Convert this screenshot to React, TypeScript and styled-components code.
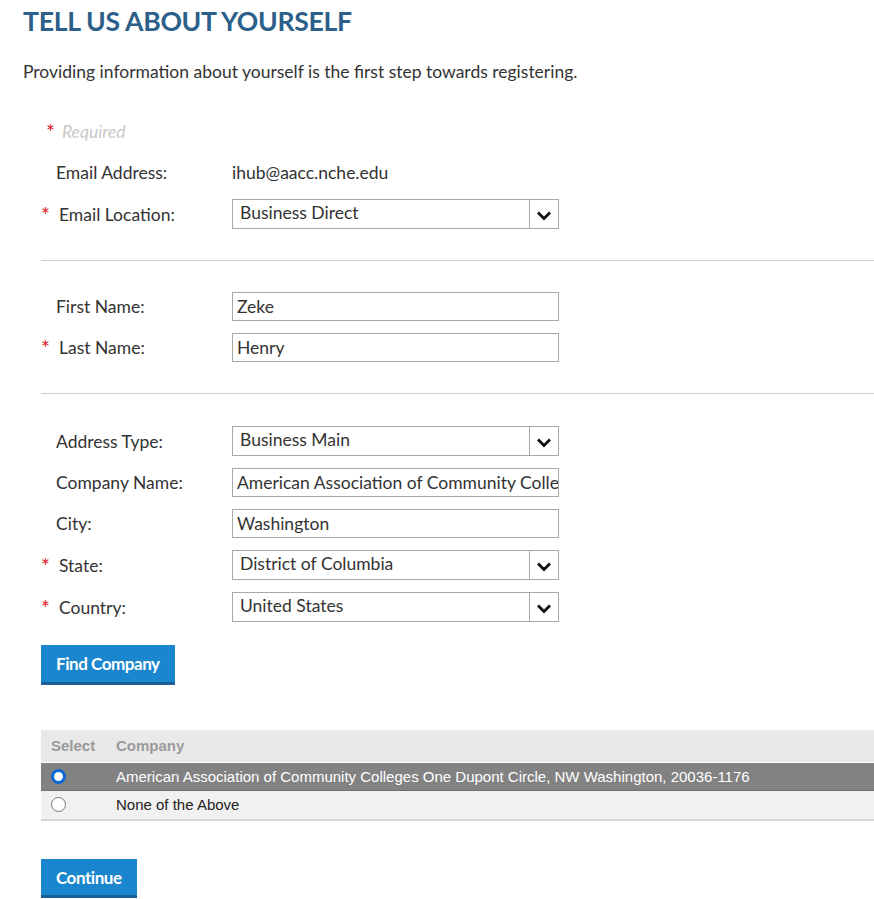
import React from "react";
import styled, { createGlobalStyle } from "styled-components";

const Global = createGlobalStyle`
  html, body { margin: 0; padding: 0; background: #fff; }
  body { font-family: Lato, "Open Sans", Arial, sans-serif; color: #333; }
  * { box-sizing: border-box; }
`;

const Page = styled.div`
  width: 874px;
  padding: 5px 0 0 23px;
`;

const Title = styled.h1`
  margin: 0;
  font-family: Lato, sans-serif;
  font-weight: 700;
  font-size: 26.6px;
  line-height: 32px;
  letter-spacing: -0.3px;
  color: #2c5f8a;
`;

const Intro = styled.p`
  margin: 24px 0 0;
  font-size: 17.5px;
  line-height: 22px;
  color: #333;
`;

const Form = styled.div`
  margin: 38px 0 0 18px;
`;

const RequiredNote = styled.div`
  display: flex;
  align-items: center;
  height: 20px;
  padding-left: 5px;
  font-size: 17.5px;
  font-style: italic;
  color: #c9c9c9;
  gap: 7px;
`;

const Star = styled.span`
  color: #e0202b;
  font-style: normal;
  font-size: 21px;
  line-height: 1;
  width: 18px;
  flex: none;
  align-self: flex-start;
  margin-top: 4px;
`;

const NoteStar = styled.span`
  color: #e0202b;
  font-style: normal;
  font-size: 21px;
  line-height: 1;
  align-self: flex-start;
`;

const Section = styled.div<{ $pt: number; $pb: number }>`
  display: flex;
  flex-direction: column;
  gap: 12px;
  padding: ${(p) => `${p.$pt}px 0 ${p.$pb}px`};
`;

const Divider = styled.hr`
  margin: 0;
  border: none;
  border-top: 1px solid #cfcfcf;
  width: 833px;
`;

const Row = styled.div`
  display: flex;
  align-items: center;
  min-height: 29px;
`;

const Label = styled.div<{ $req?: boolean }>`
  width: 191px;
  height: 29px;
  flex: none;
  display: flex;
  align-items: center;
  font-size: 17.5px;
  color: #333;
  padding-left: ${(p) => (p.$req ? "0" : "15px")};
`;

const Value = styled.div`
  font-size: 17.5px;
  color: #333;
`;

const Input = styled.div`
  width: 327px;
  height: 29px;
  border: 1px solid #a9a9a9;
  padding: 0 4px;
  display: flex;
  align-items: center;
  font-size: 17.5px;
  color: #333;
  white-space: nowrap;
  overflow: hidden;
`;

const Select = styled.div`
  width: 327px;
  height: 30px;
  border: 1px solid #a9a9a9;
  display: flex;
  font-size: 17.5px;
  color: #333;
`;

const SelectText = styled.div`
  flex: 1;
  padding: 0 7px 3px;
  display: flex;
  align-items: center;
`;

const SelectArrow = styled.div`
  width: 29px;
  border-left: 1px solid #a9a9a9;
  display: flex;
  align-items: center;
  justify-content: center;
  padding-top: 3px;
`;

const Button = styled.button<{ $h: number }>`
  display: block;
  border: none;
  border-bottom: 3px solid #1b5f93;
  background: #1a86ce;
  color: #fff;
  font-family: Lato, sans-serif;
  font-weight: 700;
  font-size: 17px;
  letter-spacing: -0.45px;
  padding: 0 15px;
  height: ${(p) => p.$h}px;
  cursor: pointer;
`;

const Table = styled.table`
  margin-top: 45px;
  width: 833px;
  border-collapse: collapse;
  font-family: "Liberation Sans", Arial, sans-serif;
  font-size: 15px;
`;

const Th = styled.th<{ $pl: number; $w?: number }>`
  background: #e9e9e9;
  color: #9a9a9a;
  font-weight: 700;
  text-align: left;
  height: 32px;
  padding: 0 0 0 ${(p) => p.$pl}px;
  width: ${(p) => (p.$w ? `${p.$w}px` : "auto")};
`;

const Tr = styled.tr<{ $sel?: boolean }>`
  background: ${(p) => (p.$sel ? "#828282" : "#f1f1f1")};
  color: ${(p) => (p.$sel ? "#fff" : "#222")};
  border-top: ${(p) => (p.$sel ? "1px solid #fff" : "none")};
  border-bottom: ${(p) => (p.$sel ? "1px solid #6f6f6f" : "2px solid #d6d6d6")};
`;

const Td = styled.td<{ $h: number }>`
  height: ${(p) => p.$h}px;
  padding: 0;
`;

const RadioCell = styled.td`
  padding: 0 0 0 10px;
  width: 75px;
`;

const Radio = styled.span<{ $on?: boolean }>`
  display: block;
  width: 15px;
  height: 15px;
  border-radius: 50%;
  background: #fff;
  border: ${(p) => (p.$on ? "3px solid #0a69d6" : "1px solid #777")};
`;

const ButtonWrap = styled.div<{ $mt: number }>`
  margin-top: ${(p) => p.$mt}px;
`;

const Chevron = () => (
  <svg width="16" height="11" viewBox="0 0 16 11">
    <path d="M2 2.5 L8 8.5 L14 2.5" fill="none" stroke="#111" strokeWidth="2.8" />
  </svg>
);

const Field = ({ label, req, children }: { label: string; req?: boolean; children: React.ReactNode }) => (
  <Row>
    <Label $req={req}>
      {req && <Star>*</Star>}
      {label}
    </Label>
    {children}
  </Row>
);

const Sel = ({ v }: { v: string }) => (
  <Select>
    <SelectText>{v}</SelectText>
    <SelectArrow>
      <Chevron />
    </SelectArrow>
  </Select>
);

export default function App() {
  return (
    <Page>
      <Global />
      <Title>TELL US ABOUT YOURSELF</Title>
      <Intro>Providing information about yourself is the first step towards registering.</Intro>
      <Form>
        <RequiredNote>
          <NoteStar>*</NoteStar>
          Required
        </RequiredNote>
        <Section $pt={17} $pb={31}>
          <Field label="Email Address:">
            <Value>ihub@aacc.nche.edu</Value>
          </Field>
          <Field label="Email Location:" req>
            <Sel v="Business Direct" />
          </Field>
        </Section>
        <Divider />
        <Section $pt={31} $pb={31}>
          <Field label="First Name:">
            <Input>Zeke</Input>
          </Field>
          <Field label="Last Name:" req>
            <Input>Henry</Input>
          </Field>
        </Section>
        <Divider />
        <Section $pt={32} $pb={0}>
          <Field label="Address Type:">
            <Sel v="Business Main" />
          </Field>
          <Field label="Company Name:">
            <Input>American Association of Community Colleges</Input>
          </Field>
          <Field label="City:">
            <Input>Washington</Input>
          </Field>
          <Field label="State:" req>
            <Sel v="District of Columbia" />
          </Field>
          <Field label="Country:" req>
            <Sel v="United States" />
          </Field>
        </Section>
        <ButtonWrap $mt={23}>
          <Button $h={40}>Find Company</Button>
        </ButtonWrap>
        <Table>
          <thead>
            <tr>
              <Th $pl={10} $w={75}>Select</Th>
              <Th $pl={0}>Company</Th>
            </tr>
          </thead>
          <tbody>
            <Tr $sel>
              <RadioCell>
                <Radio $on />
              </RadioCell>
              <Td $h={28}>American Association of Community Colleges One Dupont Circle, NW Washington, 20036-1176</Td>
            </Tr>
            <Tr>
              <RadioCell>
                <Radio />
              </RadioCell>
              <Td $h={30}>None of the Above</Td>
            </Tr>
          </tbody>
        </Table>
        <ButtonWrap $mt={38}>
          <Button $h={39}>Continue</Button>
        </ButtonWrap>
      </Form>
    </Page>
  );
}
